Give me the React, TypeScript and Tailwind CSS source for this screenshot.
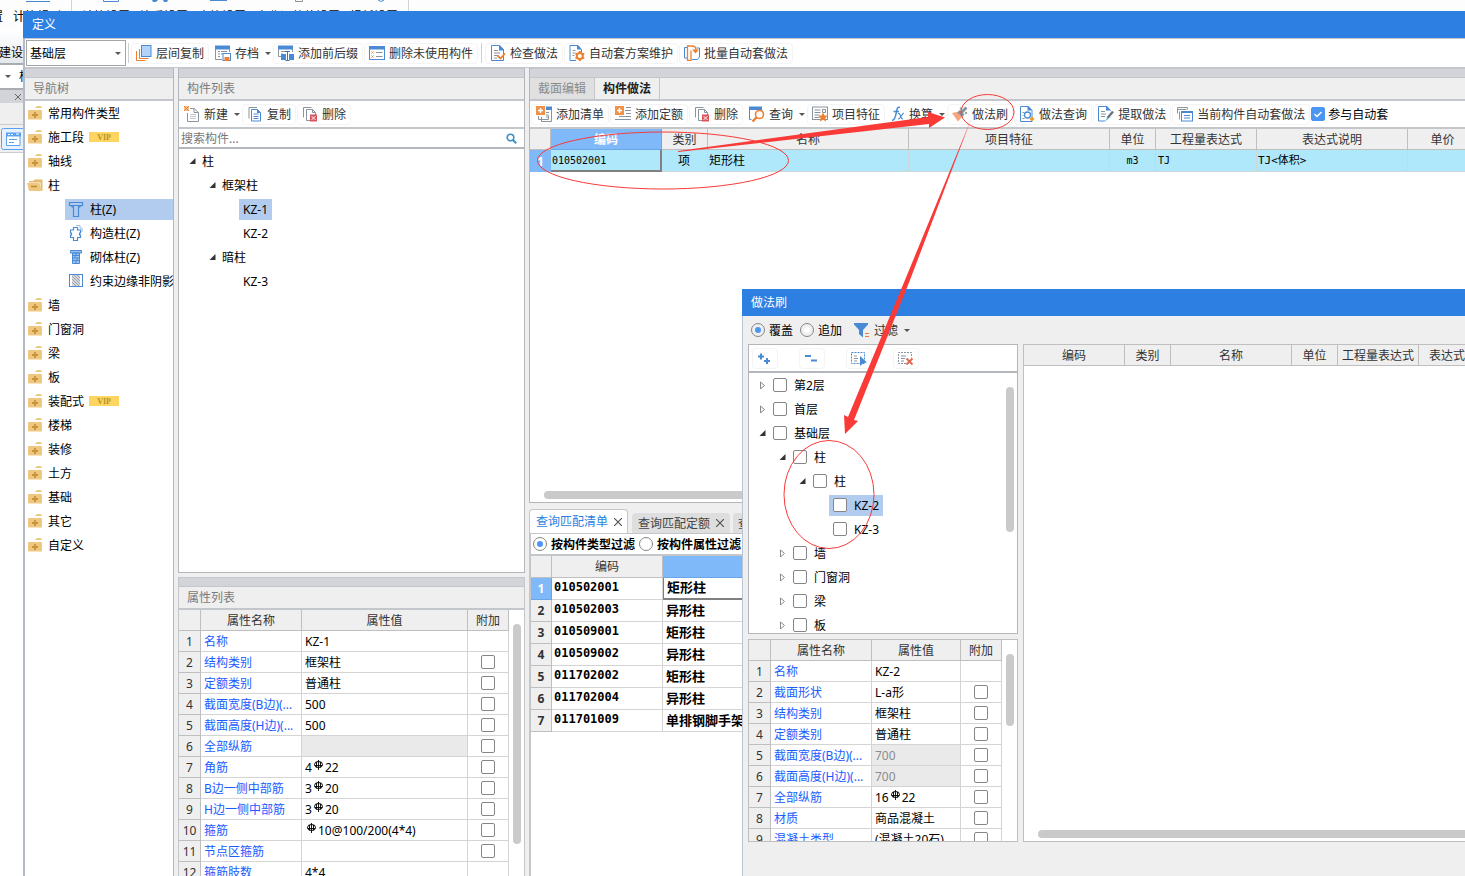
import type { ReactNode } from "react";
import clsx from "clsx";

type IconProps = { children: ReactNode; narrow?: boolean };

function Icon({ children, narrow }: IconProps) {
  return (
    <svg width={narrow ? 14 : 16} height="16" viewBox={narrow ? "0 0 14 16" : "0 0 16 16"} fill="none" className="shrink-0" aria-hidden="true">
      {children}
    </svg>
  );
}

const BLUE = "#4a8ad4";
const ORANGE = "#ee7f2e";
const GRAY = "#8b949c";

const icons = {
  layers: (
    <Icon>
      <rect x="5.500" y=".5" width="9.500" height="11" fill="#b3d3fb" stroke={BLUE} />
      <path d="M3.500 4v9.500h9M.5 6v9.500h9" stroke={ORANGE} />
    </Icon>
  ),
  archive: (
    <Icon>
      <path d="M0 .5h15v4H0z" fill={BLUE} />
      <path d="M.5 4v10.500H7M14.500 4v3M3 6.500h2M6 6.500h6M3 9h2M6 9h2M3 11.500h2" stroke={GRAY} />
      <rect x="8" y="8.500" width="7.500" height="7" fill="#fff" stroke={BLUE} />
      <path d="M9.500 12h5v4h-5z" fill={ORANGE} />
    </Icon>
  ),
  affix: (
    <Icon>
      <path d="M0 .5h15v4H0z" fill={BLUE} />
      <path d="M.5 4v7.500H4M14.500 4v3M3 6.500h4M3 9h2" stroke={GRAY} />
      <path d="M3 9h5v6H3zM11 9h5v6h-5z" fill={BLUE} />
      <path d="M7 6.500h5M9.500 6.500v9M7.500 15.500h4" stroke="#3f74b4" />
    </Icon>
  ),
  unused: (
    <Icon>
      <rect x=".5" y="1.500" width="15" height="13" fill="#fff" stroke={BLUE} />
      <path d="M0 1h16v3.500H0z" fill={BLUE} />
      <path d="M2.500 6.500l2 2M4.500 6.500l-2 2M2.500 10.500l2 2M4.500 10.500l-2 2" stroke={ORANGE} />
      <path d="M7 7.500h6.500M7 11.500h6.500" stroke={GRAY} />
    </Icon>
  ),
  check: (
    <Icon>
      <path d="M1.500.5h8l4 4v11h-12z" fill="#fff" stroke={BLUE} />
      <path d="M9 .5h1l4 4v1H9z" fill={BLUE} />
      <path d="M4 5.500h4M4 8h6M4 10.500h4M4 13h3" stroke={GRAY} />
      <path d="M7.500 10.500l3 3 4.500-5" stroke={ORANGE} strokeWidth="1.800" />
    </Icon>
  ),
  gear: (
    <Icon>
      <path d="M1 .5h7.500l4 4v3M1 .5v15h6" stroke={BLUE} />
      <path d="M8 0h1l4 4.500H8z" fill={BLUE} />
      <path d="M3.500 5.500h3M3.500 8h3M3.500 10.500h2" stroke={GRAY} />
      <circle cx="10.800" cy="11" r="3" fill="#fff" stroke={ORANGE} strokeWidth="2" />
      <path d="M10.800 6v2M10.800 14v2M6.500 8.500l1.700 1M13.500 12.500l1.700 1M15.200 8.500l-1.700 1M8.200 12.500l-1.700 1" stroke={ORANGE} strokeWidth="2" />
    </Icon>
  ),
  batch: (
    <Icon>
      <path d="M3 2.500H.5v10.500H4M12.500 3h3v9l-2 2.500H8" stroke={BLUE} />
      <path d="M5.500 15.500h-2V1H8c3 0 4 1 4 4M3.500 15.500h3.500v-10" stroke={ORANGE} strokeWidth="1.300" />
      <path d="M8 4.500h7l-3.500 4z" fill={ORANGE} />
    </Icon>
  ),
  create: (
    <Icon>
      <path d="M6 2.500h4l4.500 4v9h-11V7" fill="#fff" stroke={GRAY} />
      <path d="M10 2.500v4h4.500" stroke={GRAY} />
      <path d="M6 8.500h6M6 10.500h6M6 12.500h6" stroke="#c3c8cc" />
      <path d="M0 0h5v5H0z" fill="#f6c08e" />
      <path d="M0 0l5 5M5 0L0 5" stroke={ORANGE} />
    </Icon>
  ),
  copy: (
    <Icon>
      <path d="M2 12.500V1.500h8" stroke={GRAY} />
      <path d="M4.500 3.500h6l3 3v8.500h-9z" fill="#fff" stroke={BLUE} />
      <path d="M10 3v4h4z" fill={BLUE} />
      <path d="M6.500 8h5M6.500 10.500h5M6.500 12.500h5" stroke={BLUE} />
    </Icon>
  ),
  remove: (
    <Icon>
      <path d="M1.500 11.500V1.500h8" stroke={GRAY} />
      <path d="M8 14.500H4.500V3.500h6l3 3V9" stroke={GRAY} />
      <path d="M10.500 3.500v3h3" stroke={GRAY} />
      <rect x="8" y="8.500" width="7" height="7" fill="#d8545a" />
      <path d="M9.500 10l4 4M13.500 10l-4 4" stroke="#fff" />
    </Icon>
  ),
  addList: (
    <Icon>
      <path d="M10 .5h6v3.500h-6z" fill={BLUE} />
      <path d="M15.500 4v8.500M2.500 10v3.500h10V10M5.500 11v4.500h10V4M10 6.500h3M10 9h3M10 11h3" stroke={GRAY} />
      <rect width="9" height="9" fill="#ef9149" />
      <path d="M4.500 2v5M2 4.500h5" stroke="#fff" strokeWidth="1.400" />
    </Icon>
  ),
  addQuota: (
    <Icon>
      <path d="M11 1.500h5M10 4.500h6M11 7.500h5M4 10.500h12M0 13.500h16" stroke={GRAY} />
      <rect width="9" height="9" fill="#ef9149" />
      <path d="M4.500 2v5M2 4.500h5" stroke="#fff" strokeWidth="1.400" />
    </Icon>
  ),
  query: (
    <Icon>
      <path d="M0 .5h13v3.500H0z" fill={BLUE} />
      <path d="M.5 4v9.500h2M13 4v2" stroke={BLUE} />
      <circle cx="10.500" cy="8.500" r="4" fill="#fff" stroke={ORANGE} strokeWidth="1.600" />
      <path d="M7.500 11.500L3.500 15.500" stroke={ORANGE} strokeWidth="2.400" />
    </Icon>
  ),
  feature: (
    <Icon>
      <rect x=".5" y="1" width="15" height="12.500" fill="#fff" stroke={GRAY} />
      <path d="M2.500 4h6M2.500 6.500h6M2.500 9h5M2.500 11.500h5M10.500 3.500h3v3h-3z" stroke={GRAY} />
      <path d="M11 6.500l1.500 3 3.300.3-2.500 2.200.8 3.500-3.100-1.800-3.100 1.800.8-3.500L6.200 9.800l3.300-.3z" fill={ORANGE} />
    </Icon>
  ),
  fx: (
    <Icon narrow>
      <path d="M9 1.500C6.500.5 6 3 5.500 5.500S4.500 14 1 14.500M2.500 5.500h5.500" stroke={BLUE} strokeWidth="1.500" />
      <path d="M7 7.500c3-1 2 6 5 5.500M13 7c-2 0-3.500 6.500-6 6" stroke={BLUE} strokeWidth="1.200" />
    </Icon>
  ),
  brush: (
    <Icon>
      <path d="M0 7l5-1 5 5-4 4.500z" fill="#f8a47c" />
      <path d="M5 6.500L8 4l4.500 4.500L10 11z" fill="#8a9299" />
      <path d="M9.500 6.500L14.500 1.500" stroke="#8a9299" strokeWidth="2.800" />
      <circle cx="9" cy="2.500" r="1.300" fill="#9da4aa" />
      <circle cx="14" cy="7" r="1.300" fill="#9da4aa" />
    </Icon>
  ),
  lookup: (
    <Icon>
      <path d="M1.500.5h7.500l4 4v11H1.500z" fill="#fff" stroke={BLUE} />
      <path d="M8.500 0h1l4 4.500h-5z" fill={BLUE} />
      <path d="M3.500 6.500h2M3.500 9.500h1M3.500 12.500h2" stroke={GRAY} />
      <circle cx="8.500" cy="9" r="3" stroke={BLUE} strokeWidth="1.300" />
      <path d="M13 10.500l2.500 2.500-2.500 2.500-2.500-2.500z" fill="#f19a1f" />
    </Icon>
  ),
  extract: (
    <Icon>
      <path d="M7 15H.5V.5h8l4 4" stroke={BLUE} />
      <path d="M8 0h1l4 4.500H8z" fill={BLUE} />
      <path d="M3 5.500h4M3 8h5M3 10.500h4" stroke={GRAY} />
      <path d="M15 5.500L9.500 12" stroke="#6b747c" strokeWidth="2.400" />
      <path d="M9.500 11l1.500 1.500-4 3z" fill="#5bb8d8" />
    </Icon>
  ),
  current: (
    <Icon>
      <path d="M.5 7.500v-6h10v2M.5 3.500h9M2.500 9V5.500" stroke={GRAY} />
      <path d="M2.500 9v4.500" stroke={ORANGE} />
      <rect x="4.500" y="5.500" width="11" height="9.500" fill="#fff" stroke={BLUE} />
      <path d="M4.500 6.500h11M7 9.500h6M7 12h6" stroke={BLUE} />
    </Icon>
  ),
  filter: (
    <Icon>
      <path d="M0 1h14v1.500L9 8v7.500L5 12V8L0 2.500z" fill={BLUE} />
      <path d="M11 11.500h4M11 14.500h4" stroke={ORANGE} />
    </Icon>
  ),
  expand: (
    <Icon>
      <path d="M4 3.500v6M1 6.500h6M10 8v6M7 11h6" stroke={BLUE} strokeWidth="2" />
    </Icon>
  ),
  collapse: (
    <Icon>
      <path d="M1 6h6M7 10.500h6" stroke={BLUE} strokeWidth="2" />
    </Icon>
  ),
  pick: (
    <Icon>
      <rect x=".5" y="2.500" width="13" height="11" stroke={BLUE} strokeDasharray="2 1" />
      <path d="M3 6h3M3 8.500h4M3 11h3" stroke={GRAY} />
      <path d="M9 6l7 6.500-3.500.5L9 16z" fill={BLUE} />
    </Icon>
  ),
  unpick: (
    <Icon>
      <path d="M8 13.500H.5v-11h13v5" stroke={GRAY} strokeDasharray="2 1" />
      <path d="M3 6h5M3 8.500h4M3 11h3" stroke={GRAY} />
      <path d="M8.500 8.500l6 6M14.500 8.500l-6 6" stroke="#e2674a" strokeWidth="1.800" />
    </Icon>
  ),
  column: (
    <Icon>
      <path d="M1.500 1.500h13v3h-13zM5.500 4.500h5v11h-5zM2.500 4.500l3 2M13.500 4.500l-3 2" stroke={BLUE} strokeWidth="1.200" />
    </Icon>
  ),
  cross: (
    <Icon>
      <path d="M5.500 2.500h4v2.500h3v3h-1v2h1v2.500h-3v3h-4v-3h-3v-2.500h1v-2h-1V5h3z" stroke={BLUE} strokeWidth="1.200" />
      <path d="M8 .5h4v2.500h2v4" stroke="#9fbfe2" />
    </Icon>
  ),
  masonry: (
    <Icon>
      <path d="M2.500 1.500h11v2.500h-11zM4.500 4h7v10.500h-7z" fill="#9cc2ee" stroke={BLUE} />
      <path d="M5 6.500h6M5 9h6M5 11.500h6M8 4v2.500M7 6.500V9M9 9v2.500M8 11.500v3" stroke={BLUE} />
    </Icon>
  ),
  hatch: (
    <Icon>
      <rect x="1.500" y="1.500" width="13" height="12" fill="#fff" stroke={BLUE} />
      <path d="M4 2h8v11H4z" fill="#d5d9dd" />
      <path d="M4 3l8 8M4 6l7 7M4 9l4 4M6 2l6 6M9 2l3 3" stroke={GRAY} strokeWidth=".8" />
    </Icon>
  ),
};

function Caret() {
  return <span className="size-0 border-x-3 border-t-3 border-x-transparent border-t-[#555]" />;
}

function ToolButton({ icon, label, name, caret }: { icon: ReactNode; label?: string; name?: string; caret?: boolean }) {
  return (
    <button
      type="button"
      aria-label={name}
      className={clsx(
        "flex h-[21px] shrink-0 items-center gap-1 rounded-sm border pl-1 whitespace-nowrap text-[#333]",
        caret ? "border-transparent pr-0" : "border-[#f4f4f4] pr-1"
      )}
    >
      {icon}
      {label}
      {caret && (
        <span className="flex w-2 justify-end">
          <Caret />
        </span>
      )}
    </button>
  );
}

const boxClass =
  "block size-[14px] shrink-0 appearance-none rounded-[2px] border border-[#868686] bg-white checked:border-[#4a96f2] checked:bg-[#4a96f2]";

function Radio({ name, label, checked, bold }: { name: string; label: string; checked?: boolean; bold?: boolean }) {
  return (
    <label className={clsx("flex items-center gap-1 whitespace-nowrap text-black", bold && "font-bold")}>
      <input
        type="radio"
        name={name}
        defaultChecked={checked}
        className="size-[14px] shrink-0 appearance-none rounded-full border border-[#868686] bg-white bg-clip-content p-[3px] checked:bg-[#4a96f2]"
      />
      {label}
    </label>
  );
}

function Folder({ open }: { open?: boolean }) {
  if (open) {
    return (
      <svg width="16" height="14" viewBox="0 0 16 14" className="-ml-px shrink-0" aria-hidden="true">
        <path d="M6 3l1.500-1.500H15.500V13l-2-1V4.500H2V3z" fill="#e5bb74" />
        <path d="M0 5h12.500l2 8H2z" fill="#f0c77f" />
        <path d="M4 8.500h6" stroke="#b8892f" strokeWidth="1.500" />
      </svg>
    );
  }
  return (
    <svg width="14" height="14" viewBox="0 0 14 14" className="mr-px shrink-0" aria-hidden="true">
      <path d="M7 2q1-2 3-2h2q1.500 0 2 2z" fill="#f0c77f" />
      <rect y="4" width="14" height="9.500" rx="1" fill="#f0c77f" />
      <path d="M7 6v6M4 9h6" stroke="#c3943c" strokeWidth="1.800" />
    </svg>
  );
}

function Twist({ open }: { open?: boolean }) {
  return (
    <svg width="7" height="8" viewBox="0 0 7 8" className="shrink-0" aria-hidden="true">
      {open ? <path d="M6.500 1v6H.5z" fill="#333" /> : <path d="M1.500 1v7L5.500 4.500z" fill="#fff" stroke="#888" />}
    </svg>
  );
}

// HRB400 rebar grade sign
function Rebar() {
  return (
    <svg width="11" height="10" viewBox="0 0 11 10" fill="none" stroke="#000" className="mx-px inline-block align-[2px]" aria-label="C">
      <ellipse cx="5.500" cy="4.500" rx="4" ry="3" />
      <path d="M5.500 0v10M3.500 2v5.500M7.500 2v5.500M1.500 5.500h8" strokeWidth=".9" />
    </svg>
  );
}

function PanelTitle({ children }: { children: ReactNode }) {
  return (
    <>
      <div className="h-[10px] shrink-0 border-y border-[#c3c7cc] bg-[#d3d4da]" />
      <div className="flex h-[23px] shrink-0 items-center border-b-2 border-[#c3c7cc] bg-[#efefef] px-2 text-[#7b7b7b]">
        {children}
      </div>
    </>
  );
}

type Row = { name: string; value?: ReactNode; gray?: boolean; noBox?: boolean };

const mainProps: Row[] = [
  { name: "名称", value: "KZ-1", noBox: true },
  { name: "结构类别", value: "框架柱" },
  { name: "定额类别", value: "普通柱" },
  { name: "截面宽度(B边)(...", value: "500" },
  { name: "截面高度(H边)(...", value: "500" },
  { name: "全部纵筋", gray: true },
  { name: "角筋", value: <>4<Rebar />22</> },
  { name: "B边一侧中部筋", value: <>3<Rebar />20</> },
  { name: "H边一侧中部筋", value: <>3<Rebar />20</> },
  { name: "箍筋", value: <><Rebar />10@100/200(4*4)</> },
  { name: "节点区箍筋" },
  { name: "箍筋肢数", value: "4*4", noBox: true },
];

const brushProps: Row[] = [
  { name: "名称", value: "KZ-2", noBox: true },
  { name: "截面形状", value: "L-a形" },
  { name: "结构类别", value: "框架柱" },
  { name: "定额类别", value: "普通柱" },
  { name: "截面宽度(B边)(...", value: "700", gray: true },
  { name: "截面高度(H边)(...", value: "700", gray: true },
  { name: "全部纵筋", value: <>16<Rebar />22</> },
  { name: "材质", value: "商品混凝土" },
  { name: "混凝土类型", value: "(混凝土20石)" },
];

const headCell = "border-r border-b border-[#bfbfbf] bg-[#efefef] p-0 font-normal text-[#333]";

function PropTable({ rows, thumb }: { rows: Row[]; thumb: string }) {
  return (
    <div className="flex min-h-0 flex-1 overflow-hidden bg-white">
      <table className="h-fit flex-1 table-fixed border-separate border-spacing-0">
        <colgroup>
          <col className="w-[22px]" />
          <col className="w-[101px]" />
          <col />
          <col className="w-[41px]" />
        </colgroup>
        <thead>
          <tr className="h-[21px]">
            <th className={headCell} />
            <th className={headCell}>属性名称</th>
            <th className={headCell}>属性值</th>
            <th className={headCell}>附加</th>
          </tr>
        </thead>
        <tbody>
          {rows.map((r, i) => (
            <tr key={r.name} className="h-[21px]">
              <th className={headCell}>{i + 1}</th>
              <td className="overflow-hidden border-r border-b border-[#d4d4d4] p-0 pl-[3px] whitespace-nowrap text-[#1a5cff]">{r.name}</td>
              <td
                className={clsx(
                  "overflow-hidden border-r border-b border-[#d4d4d4] p-0 pl-[3px] whitespace-nowrap",
                  r.gray ? "bg-[#eaeaea] text-[#8c8c8c]" : "text-black"
                )}
              >
                {r.value}
              </td>
              <td className="border-r border-b border-[#d4d4d4] p-0">
                {!r.noBox && <input type="checkbox" aria-label={r.name} className={clsx(boxClass, "mx-auto")} />}
              </td>
            </tr>
          ))}
        </tbody>
      </table>
      <div className="w-[15px] shrink-0 pt-[14px] pl-1">
        <div className={clsx("w-2 rounded-full bg-[#cacaca]", thumb)} />
      </div>
    </div>
  );
}

const navTop = ["常用构件类型", "施工段", "轴线"];
const navBottom = ["墙", "门窗洞", "梁", "板", "装配式", "楼梯", "装修", "土方", "基础", "其它", "自定义"];
const navColumns = [
  { label: "柱(Z)", icon: icons.column },
  { label: "构造柱(Z)", icon: icons.cross },
  { label: "砌体柱(Z)", icon: icons.masonry },
  { label: "约束边缘非阴影", icon: icons.hatch },
];

function NavRow({ label, open }: { label: string; open?: boolean }) {
  return (
    <li className="flex h-6 items-center gap-[5px] pl-[3px] whitespace-nowrap">
      <Folder open={open} />
      {label}
      {(label === "施工段" || label === "装配式") && (
        <span className="flex h-[10px] w-[30px] items-center justify-center bg-[#fdd560] font-['Liberation_Serif',serif] text-[8px] font-bold text-[#b8922a]">
          VIP
        </span>
      )}
    </li>
  );
}

function NavTree() {
  return (
    <aside className="flex w-[149px] shrink-0 flex-col border-r border-[#b3b6ba] bg-white">
      <PanelTitle>导航树</PanelTitle>
      <ul className="overflow-hidden text-black">
        {navTop.map((n) => (
          <NavRow key={n} label={n} />
        ))}
        <NavRow label="柱" open />
        {navColumns.map((c, i) => (
          <li key={c.label} className="flex h-6 items-center pl-10">
            <span className={clsx("flex h-[21px] flex-1 items-center gap-[6px] pl-[3px] whitespace-nowrap", i === 0 && "bg-[#b1ccee]")}>
              {c.icon}
              {c.label}
            </span>
          </li>
        ))}
        {navBottom.map((n) => (
          <NavRow key={n} label={n} />
        ))}
      </ul>
    </aside>
  );
}

function ComponentColumn() {
  return (
    <section className="flex w-[347px] shrink-0 flex-col">
      <div className="flex min-h-0 flex-1 flex-col border-x border-b border-[#b3b6ba] bg-white">
        <PanelTitle>构件列表</PanelTitle>
        <div className="flex h-7 shrink-0 items-center gap-px border-b-2 border-[#c3c7cc]">
          <ToolButton icon={icons.create} label="新建" caret />
          <ToolButton icon={icons.copy} label="复制" />
          <ToolButton icon={icons.remove} label="删除" />
        </div>
        <div className="flex h-5 shrink-0 items-center border-b-2 border-[#b3b6ba] pr-[7px] pl-[2px]">
          <input type="text" aria-label="搜索构件" placeholder="搜索构件..." className="min-w-0 flex-1 outline-none placeholder:text-[#777]" />
          <svg width="11" height="11" viewBox="0 0 11 11" fill="none" stroke="#3d8fc4" aria-hidden="true">
            <circle cx="4.500" cy="4.500" r="3.300" strokeWidth="1.600" />
            <path d="M7 7l3.200 3.200" strokeWidth="2" />
          </svg>
        </div>
        <ul className="text-black">
          <li className="flex h-6 items-center gap-[6px] pl-[10px]"><Twist open />柱</li>
          <li className="flex h-6 items-center gap-[6px] pl-[30px]"><Twist open />框架柱</li>
          <li className="flex h-6 items-center pl-[60px]">
            <span className="flex h-[21px] items-center bg-[#b1ccee] px-1">KZ-1</span>
          </li>
          <li className="flex h-6 items-center pl-16">KZ-2</li>
          <li className="flex h-6 items-center gap-[6px] pl-[30px]"><Twist open />暗柱</li>
          <li className="flex h-6 items-center pl-16">KZ-3</li>
        </ul>
      </div>
      <div className="mt-1 flex h-[299px] shrink-0 flex-col border-x border-[#c3c7cc]">
        <PanelTitle>属性列表</PanelTitle>
        <PropTable rows={mainProps} thumb="h-[220px]" />
      </div>
    </section>
  );
}

const matches = [
  ["010502001", "矩形柱"],
  ["010502003", "异形柱"],
  ["010509001", "矩形柱"],
  ["010509002", "异形柱"],
  ["011702002", "矩形柱"],
  ["011702004", "异形柱"],
  ["011701009", "单排钢脚手架"],
];

const practiceCell = "border-r border-b border-[#cfd6da] bg-[#aee8fa] p-0 text-black";
const mono = "font-['DejaVu_Sans_Mono','Noto_Sans_CJK_SC',monospace]";

function PracticeTable() {
  return (
    <table className="w-[948px] table-fixed border-separate border-spacing-0">
      <colgroup>
        <col className="w-[21px]" />
        <col className="w-[111px]" />
        <col className="w-[46px]" />
        <col className="w-[201px]" />
        <col className="w-[201px]" />
        <col className="w-[46px]" />
        <col className="w-[101px]" />
        <col className="w-[151px]" />
        <col className="w-[70px]" />
      </colgroup>
      <thead>
        <tr className="h-[21px]">
          <th className={headCell} />
          <th className="border-r border-b border-[#6aa5e8] bg-[#80b9fa] p-0 font-bold text-white">编码</th>
          {["类别", "名称", "项目特征", "单位", "工程量表达式", "表达式说明", "单价"].map((h) => (
            <th key={h} className={headCell}>{h}</th>
          ))}
        </tr>
      </thead>
      <tbody>
        <tr className="h-[22px]">
          <th className="bg-[#80b9fa] p-0 font-bold text-white">1</th>
          <td className={clsx("border-r-2 border-b-2 border-[#808080] bg-[#aee8fa] p-0 pl-px text-[10px] text-black", mono)}>010502001</td>
          <td className={clsx(practiceCell, "pr-px text-center")}>项</td>
          <td className={clsx(practiceCell, "pl-px")}>矩形柱</td>
          <td className={practiceCell} />
          <td className={clsx(practiceCell, mono, "text-center text-[10px]")}>m3</td>
          <td className={clsx(practiceCell, mono, "pl-[2px] text-[10px]")}>TJ</td>
          <td className={clsx(practiceCell, mono, "pl-px text-[11px]")}>TJ&lt;体积&gt;</td>
          <td className={practiceCell} />
        </tr>
      </tbody>
    </table>
  );
}

function Cross() {
  return (
    <svg width="8" height="8" viewBox="0 0 8 8" stroke="#555" strokeWidth="1.200" aria-hidden="true">
      <path d="M0 0l8 8M8 0L0 8" />
    </svg>
  );
}

function MatchPanel() {
  return (
    <div className="flex h-[368px] shrink-0 flex-col">
      <div className="flex h-[25px] items-end">
        <button type="button" className="flex h-6 w-[99px] items-center gap-[6px] rounded-t-sm border border-b-0 border-[#c3c7cc] bg-white pl-[6px] whitespace-nowrap text-[#2b7fe0]">
          查询匹配清单
          <Cross />
        </button>
        <button type="button" className="ml-1 flex h-[20px] w-[98px] items-center gap-[6px] rounded-t-sm bg-[#dedede] pl-[6px] whitespace-nowrap text-[#444]">
          查询匹配定额
          <Cross />
        </button>
        <button type="button" className="ml-[3px] flex h-[20px] w-[98px] items-center rounded-t-sm bg-[#dedede] pl-[5px] whitespace-nowrap text-[#444]">
          查询外部清单
        </button>
      </div>
      <div className="flex min-h-0 flex-1 flex-col border-t border-l-2 border-[#c3c7cc] bg-white">
        <div className="flex h-[22px] shrink-0 items-center gap-1 border-b-2 border-[#c3c7cc] pl-[2px]">
          <Radio name="match" label="按构件类型过滤" checked bold />
          <Radio name="match" label="按构件属性过滤" bold />
        </div>
        <table className="w-[433px] table-fixed border-separate border-spacing-0">
          <colgroup>
            <col className="w-[21px]" />
            <col className="w-[111px]" />
            <col className="w-[301px]" />
          </colgroup>
          <thead>
            <tr className="h-[22px]">
              <th className={headCell} />
              <th className={headCell}>编码</th>
              <th className="border-b border-[#6aa5e8] bg-[#80b9fa] p-0 text-white">名称</th>
            </tr>
          </thead>
          <tbody className="font-bold text-black">
            {matches.map(([code, name], i) => (
              <tr key={code} className="h-[22px]">
                <th
                  className={clsx(
                    "border-r border-b p-0",
                    i === 0 ? "border-[#6aa5e8] bg-[#80b9fa] text-white" : "border-[#bfbfbf] bg-[#efefef] text-[#333]"
                  )}
                >
                  {i + 1}
                </th>
                <td className={clsx("border-r border-b border-[#d4d4d4] p-0 pb-1 pl-[2px] leading-4", mono)}>{code}</td>
                <td
                  className={clsx(
                    "p-0 pb-[2px] pl-[3px] text-[13px] leading-4",
                    i === 0 ? "border-b-2 border-l border-[#808080]" : "border-b border-[#d4d4d4]"
                  )}
                >
                  {name}
                </td>
              </tr>
            ))}
          </tbody>
        </table>
      </div>
    </div>
  );
}

function PracticeColumn() {
  return (
    <section className="flex min-w-0 flex-1 flex-col overflow-hidden">
      <div className="flex min-h-0 flex-1 flex-col border-b border-l border-[#b3b6ba] bg-white">
        <div className="h-[10px] shrink-0 border-y border-[#c3c7cc] bg-[#d3d4da]" />
        <div className="flex h-[23px] shrink-0 border-b-2 border-[#c3c7cc] bg-[#efefef]">
          <button type="button" className="w-[65px] border-r border-[#c3c7cc] bg-[#e0e0e0] text-[#8a8a8a]">截面编辑</button>
          <button type="button" className="w-[65px] border-r border-[#c3c7cc] font-bold text-[#222]">构件做法</button>
        </div>
        <div className="flex h-7 shrink-0 items-center gap-px border-b-2 border-[#c3c7cc] pl-px">
          <ToolButton icon={icons.addList} label="添加清单" />
          <ToolButton icon={icons.addQuota} label="添加定额" />
          <ToolButton icon={icons.remove} label="删除" />
          <ToolButton icon={icons.query} label="查询" caret />
          <ToolButton icon={icons.feature} label="项目特征" />
          <ToolButton icon={icons.fx} label="换算" caret />
          <ToolButton icon={icons.brush} label="做法刷" />
          <ToolButton icon={icons.lookup} label="做法查询" />
          <ToolButton icon={icons.extract} label="提取做法" />
          <ToolButton icon={icons.current} label="当前构件自动套做法" />
          <label className="flex shrink-0 items-center gap-[3px] whitespace-nowrap text-black">
            <span className="relative">
              <input type="checkbox" defaultChecked className={boxClass} />
              <svg viewBox="0 0 14 14" fill="none" className="pointer-events-none absolute inset-0" aria-hidden="true">
                <path d="M3.500 7l2.500 2.500 4.500-4.500" stroke="#fff" strokeWidth="1.500" />
              </svg>
            </span>
            参与自动套
          </label>
        </div>
        <div className="min-h-0 flex-1 overflow-hidden">
          <PracticeTable />
        </div>
        <div className="h-[11px] shrink-0 pl-[14px]">
          <div className="h-2 rounded-l-full bg-[#cacaca]" />
        </div>
      </div>
      <div className="h-[5px] shrink-0" />
      <MatchPanel />
    </section>
  );
}

type Node = { label: string; depth: number; state: "open" | "closed" | "leaf" };

const brushTree: Node[] = [
  { label: "第2层", depth: 0, state: "closed" },
  { label: "首层", depth: 0, state: "closed" },
  { label: "基础层", depth: 0, state: "open" },
  { label: "柱", depth: 1, state: "open" },
  { label: "柱", depth: 2, state: "open" },
  { label: "KZ-2", depth: 3, state: "leaf" },
  { label: "KZ-3", depth: 3, state: "leaf" },
  { label: "墙", depth: 1, state: "closed" },
  { label: "门窗洞", depth: 1, state: "closed" },
  { label: "梁", depth: 1, state: "closed" },
  { label: "板", depth: 1, state: "closed" },
];

const indent = ["pl-[10px]", "pl-[30px]", "pl-[50px]", "pl-[80px]"];

function BrushDialog() {
  return (
    <div role="dialog" aria-label="做法刷" className="absolute top-[289px] right-0 bottom-0 left-[742px] flex flex-col overflow-hidden bg-[#efefef]">
      <h2 className="flex h-[27px] shrink-0 items-center bg-[#2d7fe1] pl-[9px] text-white">做法刷</h2>
      <div className="flex min-h-0 flex-1 flex-col border-l border-[#b9c4d6]">
        <div className="flex h-7 shrink-0 items-center gap-[7px] pl-2">
          <Radio name="mode" label="覆盖" checked />
          <Radio name="mode" label="追加" />
          <ToolButton icon={icons.filter} label="过滤" caret />
        </div>
        <div className="flex min-h-0 flex-1 gap-[5px] pb-[34px] pl-[5px]">
          <div className="flex w-[270px] shrink-0 flex-col">
            <div className="flex min-h-0 flex-1 flex-col border border-[#b3b6ba] bg-white">
              <div className="flex h-7 shrink-0 items-center gap-[21px] border-b-2 border-[#b3b6ba] pl-[3px]">
                <ToolButton icon={icons.expand} name="全部展开" />
                <ToolButton icon={icons.collapse} name="全部折叠" />
                <ToolButton icon={icons.pick} name="全选" />
                <ToolButton icon={icons.unpick} name="取消选择" />
              </div>
              <div className="flex min-h-0 flex-1 overflow-hidden">
                <ul className="flex-1 text-black">
                  {brushTree.map((n, i) => (
                    <li key={i} className={clsx("flex h-6 items-center", indent[n.depth])}>
                      {n.state !== "leaf" && <Twist open={n.state === "open"} />}
                      <label
                        className={clsx(
                          "flex h-[21px] items-center gap-[7px] whitespace-nowrap",
                          n.state === "leaf" ? "px-1" : "pl-[7px]",
                          n.label === "KZ-2" && "bg-[#b1ccee]"
                        )}
                      >
                        <input type="checkbox" className={boxClass} />
                        {n.label}
                      </label>
                    </li>
                  ))}
                </ul>
                <div className="w-[11px] shrink-0 pt-[14px]">
                  <div className="h-[145px] w-2 rounded-full bg-[#cacaca]" />
                </div>
              </div>
            </div>
            <div className="mt-[5px] flex h-[203px] shrink-0 flex-col border border-[#bfbfbf]">
              <PropTable rows={brushProps} thumb="h-[72px]" />
            </div>
          </div>
          <div className="flex min-w-0 flex-1 flex-col overflow-hidden border border-r-0 border-[#bfbfbf] bg-white">
            <table className="w-[476px] table-fixed border-separate border-spacing-0">
              <colgroup>
                <col className="w-[101px]" />
                <col className="w-[46px]" />
                <col className="w-[121px]" />
                <col className="w-[46px]" />
                <col className="w-[81px]" />
                <col className="w-[81px]" />
              </colgroup>
              <thead>
                <tr className="h-[21px]">
                  {["编码", "类别", "名称", "单位", "工程量表达式", "表达式说明"].map((h) => (
                    <th key={h} className={clsx(headCell, "whitespace-nowrap")}>{h}</th>
                  ))}
                </tr>
              </thead>
            </table>
            <div className="mt-auto mb-[3px] ml-[14px] h-2 shrink-0 rounded-l-full bg-[#cacaca]" />
          </div>
        </div>
      </div>
    </div>
  );
}

function DefineWindow() {
  return (
    <div className="absolute top-[11px] right-0 bottom-0 left-[23px] flex flex-col overflow-hidden bg-[#efefef]">
      <h1 className="flex h-[27px] shrink-0 items-center bg-[#2d7fe1] pl-[9px] text-white">定义</h1>
      <div className="flex min-h-0 flex-1 flex-col border-l-2 border-[#b3bac4]">
        <div className="flex h-[30px] shrink-0 items-center gap-px border-y border-[#c3c7cc] bg-white pl-px">
          <div className="relative">
            <select aria-label="楼层" className="block h-[26px] w-[100px] appearance-none border border-[#a5a5a5] bg-white pl-[3px] text-black">
              <option>基础层</option>
            </select>
            <span className="pointer-events-none absolute inset-y-0 right-[5px] flex items-center">
              <Caret />
            </span>
          </div>
          <span className="mx-px h-5 w-px bg-[#d0d0d0]" />
          <ToolButton icon={icons.layers} label="层间复制" />
          <ToolButton icon={icons.archive} label="存档" caret />
          <ToolButton icon={icons.affix} label="添加前后缀" />
          <ToolButton icon={icons.unused} label="删除未使用构件" />
          <span className="mx-[2px] h-5 w-px bg-[#d0d0d0]" />
          <ToolButton icon={icons.check} label="检查做法" />
          <ToolButton icon={icons.gear} label="自动套方案维护" />
          <ToolButton icon={icons.batch} label="批量自动套做法" />
        </div>
        <div className="flex min-h-0 flex-1 gap-1">
          <NavTree />
          <ComponentColumn />
          <PracticeColumn />
        </div>
      </div>
    </div>
  );
}

// strip of the host application that shows behind the windows
function HostApp() {
  return (
    <div className="h-full w-full bg-white text-black">
      <div className="relative flex h-[30px] items-start gap-[10px] bg-[#fdfdfe] whitespace-nowrap">
        <svg width="400" height="3" viewBox="0 0 400 3" fill="none" className="absolute top-0 left-0" aria-hidden="true">
          <path d="M26 1.500h24M103.500 0v1.500h15V0M210 .5h17" stroke={BLUE} />
          <path d="M152 0h6l-2 2h-3zM163 0h5l-1 2h-3z" fill={BLUE} />
          <path d="M295.500 0v1.500h7V0" stroke={GRAY} />
          <path d="M378 0q3 3 6 0" stroke={BLUE} />
        </svg>
        <span className="-ml-[9px] pt-2">置</span>
        <span className="pt-2">计算规则</span>
        <span className="h-[11px] w-px bg-[#d0d3d6]" />
        <span className="pt-2">计算设置</span>
        <span className="pt-2">比重设置</span>
        <span className="pt-2">弯钩设置</span>
        <span className="pt-2">弯曲调整值设置</span>
        <span className="pt-2">损耗设置</span>
        <span className="h-[11px] w-px bg-[#d0d3d6]" />
      </div>
      <div className="w-6 overflow-hidden whitespace-nowrap">
        <div className="h-[35px] border-b-2 border-[#a9adb2] bg-linear-to-b from-white to-[#e4e8ec] pt-[14px]">
          <span className="-ml-px">建设</span>
        </div>
        <div className="flex h-[25px] items-center border-b-2 border-[#a9adb2] pl-[5px]">
          <Caret />
          <span className="ml-[5px] h-full w-px bg-[#b3b6ba]" />
          <span className="pl-[3px]">构</span>
        </div>
        <div className="flex h-[13px] items-center justify-end bg-[#d3d4da] pr-[3px]">
          <svg width="6" height="6" viewBox="0 0 6 6" stroke="#666" aria-hidden="true">
            <path d="M0 0l6 6M6 0L0 6" />
          </svg>
        </div>
        <div className="h-[22px] border-b border-[#c9cdd2] bg-[#efefef]" />
        <div className="flex h-[28px] items-center border-b border-[#c9cdd2] bg-[#efefef] pl-px">
          <svg width="23" height="22" viewBox="0 0 23 22" fill="none" aria-hidden="true">
            <rect x=".5" y=".5" width="26" height="21" rx="2" fill="#e6f1fd" stroke="#5aa2f0" />
            <path d="M5.500 6v11.500h13.500V6" fill="#fff" stroke="#5aa2f0" />
            <path d="M5 4.500h15v4H5z" fill="#5aa2f0" />
            <path d="M7 6.500h2M10 6.500h2M15 6h3" stroke="#fff" />
            <path d="M8 11.500h8M8 14.500h5" stroke="#5aa2f0" />
          </svg>
        </div>
      </div>
    </div>
  );
}

function Annotations() {
  return (
    <svg className="pointer-events-none absolute inset-0 h-full w-full" fill="none" aria-hidden="true">
      <g stroke="#f93a37">
        <ellipse cx="663" cy="160.500" rx="125.500" ry="28.500" />
        <ellipse cx="987.500" cy="112" rx="26.500" ry="17.500" />
        <ellipse cx="829" cy="494.500" rx="45" ry="54" />
      </g>
      <g fill="#f93a37">
        <path d="M678 151L928 117V112L945 117.500 929 128V124L678 152z" />
        <path d="M972 117L905 280 848 417 844 415 845 434 858 421 854 420 910 280z" />
      </g>
    </svg>
  );
}

export default function App() {
  return (
    <main className="relative h-screen overflow-hidden font-['Noto_Sans','Noto_Sans_CJK_SC',sans-serif] text-[12px] leading-[17px]">
      <HostApp />
      <DefineWindow />
      <BrushDialog />
      <Annotations />
    </main>
  );
}
